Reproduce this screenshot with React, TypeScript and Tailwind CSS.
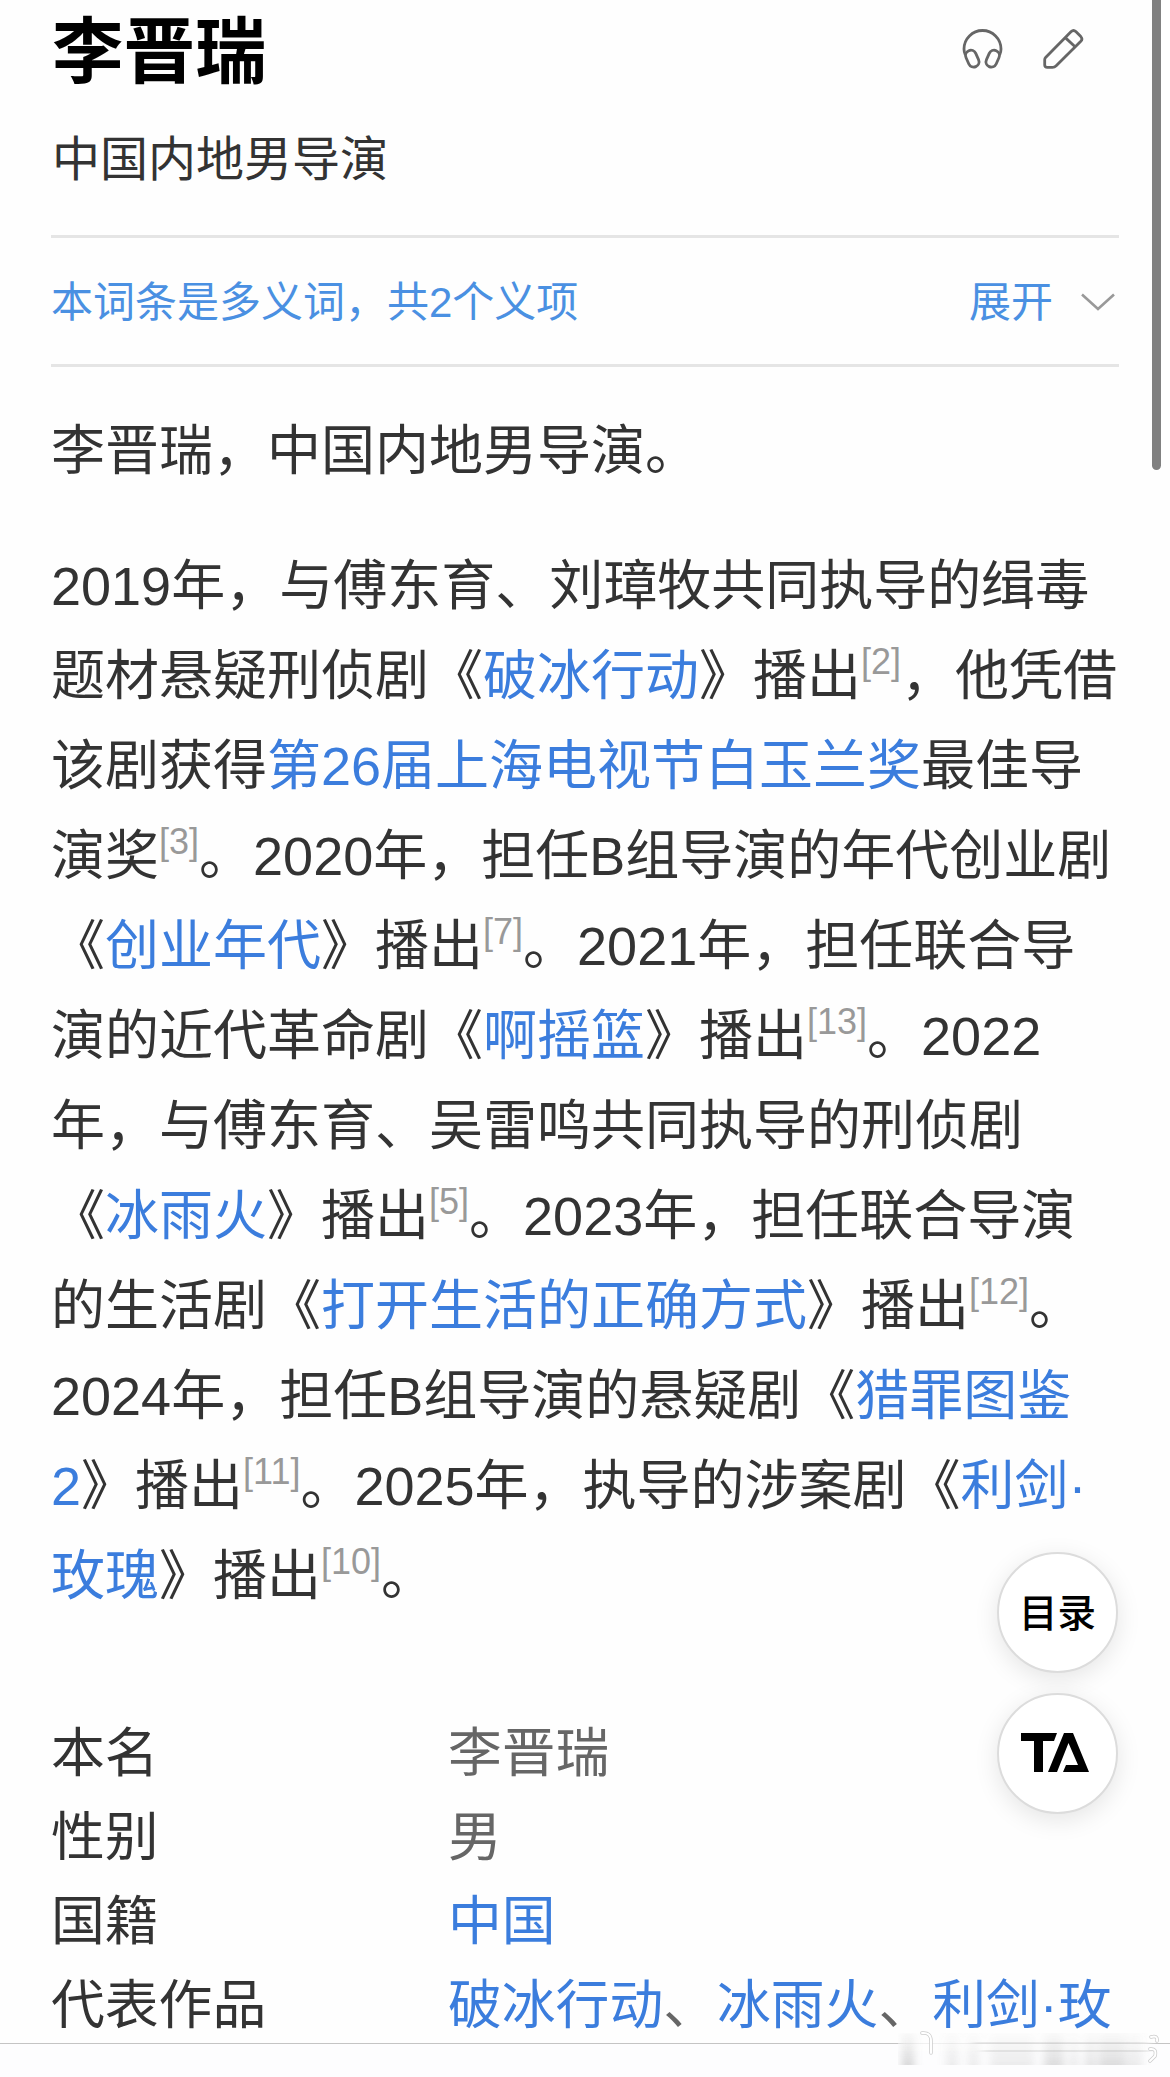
import type {ReactNode} from 'react';

interface ChildrenProps {
    children: ReactNode;
}

interface InfoRow {
    label: string;
    value: ReactNode;
}

const Link: React.FC<ChildrenProps> = ({children}) => (
    <a className="text-[#3b7ddd]">{children}</a>
);

const Ref: React.FC<{n: number}> = ({n}) => (
    <span className="align-[21px] text-4xl leading-0 text-[#999]">[{n}]</span>
);

const HeadphonesIcon = () => (
    <svg className="size-[42px]" viewBox="0 0 42 42" fill="none" stroke="#666" strokeWidth="2.8">
        <path d="M3.4 27C2.400 25 2 23 2 21a18.5 18.5 0 0 1 37 0c0 2-.4 4-1.4 6" />
        <rect x="5" y="22" width="10.6" height="17.4" rx="5.3" transform="rotate(-24 10.3 30.7)" />
        <rect x="25.4" y="22" width="10.6" height="17.4" rx="5.3" transform="rotate(24 30.7 30.7)" />
    </svg>
);

const PencilIcon = () => (
    <svg
        className="size-[42px]"
        viewBox="0 0 42 42"
        fill="none"
        stroke="#666"
        strokeWidth="2.8"
        strokeLinejoin="round"
    >
        <path d="M2.6 29.4 28.2 3.6Q30.5 1.4 32.8 3.6L37.8 8.6Q40 11 37.8 13.3L13.2 37.8Q11.6 39.4 9.4 39.4H4.2Q1.7 39.4 1.7 37V31.8Q1.7 30.3 2.6 29.4Z" />
        <path d="M22 9.4 32.4 19" />
    </svg>
);

const TaLogo = () => (
    <svg className="mr-1.5 mb-0.5 h-[39px] w-[68px]" viewBox="0 0 68 39" fill="#000">
        <path d="M0 0H36L33 8H22V39H13V8H0Z" />
        <path d="M43 0H52L68 39H42L45 32H57L47.5 10 36 39H27Z" />
    </svg>
);

const infoRows: InfoRow[] = [
    {label: '本名', value: '李晋瑞'},
    {label: '性别', value: '男'},
    {label: '国籍', value: <Link>中国</Link>},
    {
        label: '代表作品',
        value: (
            <>
                <Link>破冰行动</Link>、<Link>冰雨火</Link>、<Link>利剑·玫</Link>
            </>
        )
    }
];

// x, width, opacity of the smeared bars
const smears = [
    [4, 12, 0.3],
    [48, 12, 0.14],
    [70, 11, 0.14],
    [92, 44, 0.13],
    [146, 20, 0.24],
    [172, 8, 0.16],
    [188, 8, 0.24],
    [200, 27, 0.24],
    [228, 16, 0.14]
];

const Watermark = () => (
    <svg className="absolute top-[2027px] left-[898px] h-[44px] w-[266px]" viewBox="0 0 266 44">
        <defs>
            <linearGradient id="fade" x1="0" y1="0" x2="0" y2="1">
                <stop offset="0" stopColor="#888" stopOpacity="0.15" />
                <stop offset="1" stopColor="#777" />
            </linearGradient>
            <filter id="soft" x="-10%" y="-10%" width="120%" height="120%">
                <feGaussianBlur stdDeviation="4 0.5" />
            </filter>
        </defs>
        <rect x="0" y="10" width="252" height="14" fill="#fff" opacity="0.75" filter="url(#soft)" />
        <g filter="url(#soft)">
            {smears.map(([x, width, opacity]) => (
                <rect key={x} x={x} y="6" width={width} height="32" fill="url(#fade)" opacity={opacity} />
            ))}
            <path d="M76 16H250M84 24H252" stroke="#999" strokeWidth="2" opacity="0.2" />
        </g>
        <g fill="none" strokeLinecap="round">
            <path d="M24 6q9-1 9 8v12M253 10q7-2 6 4M252 22q7-1 5 7l-5 5" stroke="#ccc" strokeWidth="3.5" />
            <path d="M24 6q9-1 9 8v12M253 10q7-2 6 4M252 22q7-1 5 7l-5 5" stroke="#fff" strokeWidth="2" />
        </g>
    </svg>
);

const App = () => (
    <div
        lang="zh-CN"
        className="relative h-[2077px] w-[1170px] overflow-hidden bg-[#fefefe] font-['Liberation_Sans','Noto_Sans_CJK_SC',sans-serif] whitespace-nowrap text-[#333]"
    >
        <main className="h-[2043px] overflow-hidden px-[51px]">
            <header className="h-[238px] border-b-3 border-[#e5e5e5]">
                <div className="flex h-[98px] items-center justify-between pr-[34px]">
                    <h1 className="pt-[5px] pl-px text-[71.5px] leading-[98px] font-bold text-black">李晋瑞</h1>
                    <div className="flex gap-[39px]">
                        <HeadphonesIcon />
                        <PencilIcon />
                    </div>
                </div>
                <p className="pt-[26px] pl-px text-5xl leading-[72px]">中国内地男导演</p>
            </header>

            <div className="flex h-[129px] items-center justify-between border-b-3 border-[#e5e5e5] pt-0.5 pr-1 text-[42px] text-[#4a90e2]">
                <span>本词条是多义词，共2个义项</span>
                <div className="flex items-center gap-[28px]">
                    <span>展开</span>
                    <svg className="h-[18px] w-[34px]" viewBox="0 0 34 18" fill="none" stroke="#999" strokeWidth="2.6">
                        <path d="M1 1.5 17 16 33 1.5" />
                    </svg>
                </div>
            </div>

            <article className="flex flex-col gap-[45px] pt-[39px] text-[54px] leading-[90px]">
                <p>李晋瑞，中国内地男导演。</p>
                <p>
                    2019年，与傅东育、刘璋牧共同执导的缉毒
                    <br />
                    题材悬疑刑侦剧《<Link>破冰行动</Link>》播出
                    <Ref n={2} />
                    ，他凭借
                    <br />
                    该剧获得<Link>第26届上海电视节白玉兰奖</Link>最佳导
                    <br />
                    演奖
                    <Ref n={3} />
                    。2020年，担任B组导演的年代创业剧
                    <br />
                    《<Link>创业年代</Link>》播出
                    <Ref n={7} />
                    。2021年，担任联合导
                    <br />
                    演的近代革命剧《<Link>啊摇篮</Link>》播出
                    <Ref n={13} />
                    。2022
                    <br />
                    年，与傅东育、吴雷鸣共同执导的刑侦剧
                    <br />
                    《<Link>冰雨火</Link>》播出
                    <Ref n={5} />
                    。2023年，担任联合导演
                    <br />
                    的生活剧《<Link>打开生活的正确方式</Link>》播出
                    <Ref n={12} />
                    。
                    <br />
                    2024年，担任B组导演的悬疑剧《
                    <Link>
                        猎罪图鉴
                        <br />2
                    </Link>
                    》播出
                    <Ref n={11} />
                    。2025年，执导的涉案剧《
                    <Link>
                        利剑·
                        <br />
                        玫瑰
                    </Link>
                    》播出
                    <Ref n={10} />。
                </p>
            </article>

            <dl className="pt-[90px] text-[53.8px] leading-[84px]">
                {infoRows.map(({label, value}) => (
                    <div key={label} className="flex">
                        <dt className="w-[397px]">{label}</dt>
                        <dd className="text-[#666]">{value}</dd>
                    </div>
                ))}
            </dl>
        </main>

        <footer className="h-[34px] border-t border-[#c4c4c4] bg-[#fdfdfe]" />

        <div className="absolute top-0 right-[9px] h-[470px] w-[9px] rounded-b-full bg-[#808080]" />

        <div className="absolute top-[1552px] left-[997px] flex flex-col gap-[20px]">
            <button className="flex size-[121px] items-center justify-center rounded-full border-2 border-[#dcdcdc] bg-white pt-0.5 text-[38.5px] font-medium text-black shadow-[0_6px_24px_rgba(0,0,0,0.1)]">
                目录
            </button>
            <button className="flex size-[121px] items-center justify-center rounded-full border-2 border-[#dcdcdc] bg-white shadow-[0_6px_24px_rgba(0,0,0,0.1)]">
                <TaLogo />
            </button>
        </div>

        <Watermark />
    </div>
);

export default App;
